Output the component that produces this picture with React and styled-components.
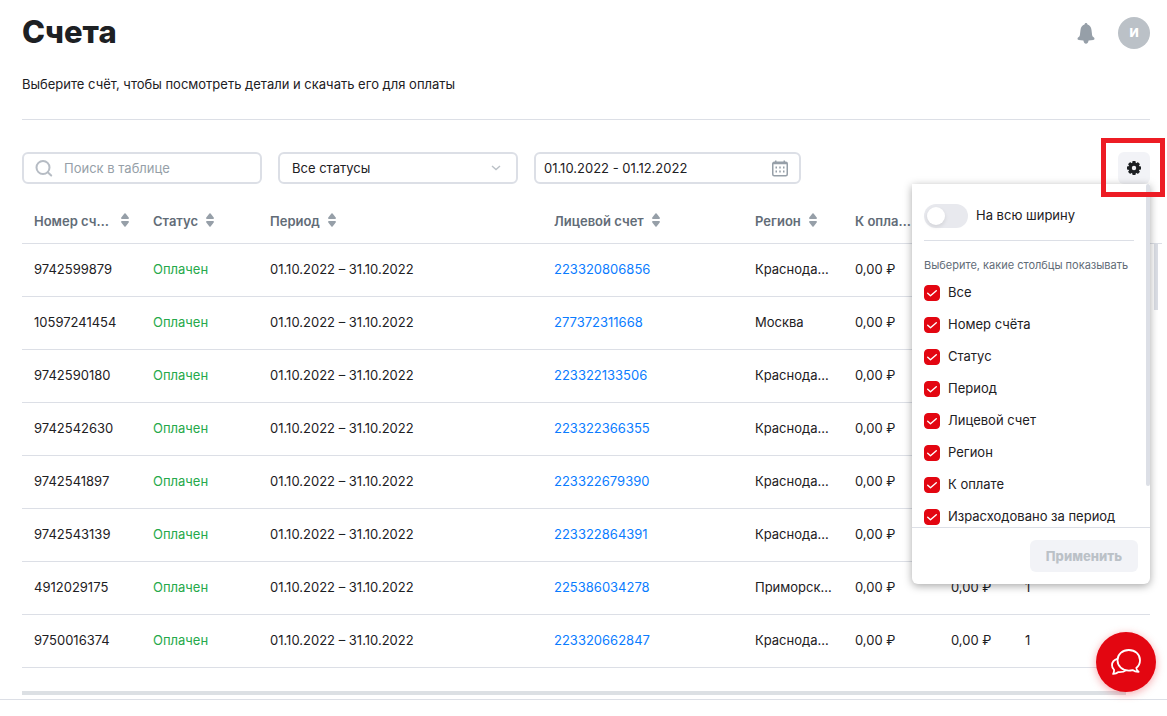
import React from "react";
import styled, { createGlobalStyle } from "styled-components";

const color = {
  text: "#1d2023",
  muted: "#626c77",
  icon: "#969fa8",
  line: "#dcdfe6",
  hover: "#f2f3f7",
  red: "#e30611",
  green: "#26a94a",
  link: "#0a7cff",
};

const GlobalStyle = createGlobalStyle`
  *, *::before, *::after { box-sizing: border-box; }
  body {
    margin: 0;
    background: #fff;
    color: ${color.text};
    font: 400 13px/20px Inter, "Liberation Sans", sans-serif;
    overflow-x: hidden;
  }
  button, input, select { font: inherit; color: inherit; margin: 0; }
`;

const Page = styled.main`
  padding: 12px 17px 4px 22px;
  border-bottom: 1px solid ${color.line};
`;

const Header = styled.header`
  display: flex;
  justify-content: space-between;
  align-items: flex-start;
  padding-bottom: 25px;
  border-bottom: 1px solid ${color.line};
`;

const Title = styled.h1`
  margin: 0 0 22px;
  font-size: 31px;
  line-height: 40px;
  font-weight: 800;
`;

const Subtitle = styled.p`
  margin: 0;
`;

const UserArea = styled.div`
  display: flex;
  align-items: center;
  gap: 20px;
  padding-top: 5px;
`;

const BellButton = styled.button`
  display: grid;
  place-items: center;
  width: 24px;
  height: 32px;
  padding: 0;
  border: 0;
  background: none;
`;

const Avatar = styled.button`
  width: 32px;
  height: 32px;
  padding: 0;
  border: 0;
  border-radius: 50%;
  background: #bbc1c7;
  color: #fff;
  font-size: 12px;
  font-weight: 800;
`;

const Toolbar = styled.div`
  display: flex;
  gap: 16px;
  margin-top: 32px;
`;

const Field = styled.div`
  display: flex;
  align-items: center;
  position: relative;
  width: ${(p) => p.$width}px;
  height: 32px;
  border: 2px solid ${color.line};
  border-radius: 6px;
  svg { flex: none; pointer-events: none; }
`;

const SearchField = styled(Field)`
  gap: 11px;
  padding: 0 11px;
`;

const TextInput = styled.input`
  flex: 1;
  min-width: 0;
  padding: 0;
  border: 0;
  outline: 0;
  background: none;
  &::placeholder { color: ${color.icon}; opacity: 1; }
`;

const StatusSelect = styled.select`
  width: 100%;
  height: 100%;
  padding: 0 32px 0 12px;
  border: 0;
  outline: 0;
  appearance: none;
  background: none;
`;

const SelectArrow = styled.span`
  position: absolute;
  right: 15px;
  display: flex;
  pointer-events: none;
`;

const DateField = styled(Field)`
  padding: 0 11px 0 8px;
`;

const Settings = styled.div`
  position: relative;
  margin-left: auto;
`;

const GearButton = styled.button`
  display: grid;
  place-items: center;
  width: 32px;
  height: 32px;
  padding: 0;
  border: 0;
  border-radius: 6px;
  background: ${color.hover};
`;

const Highlight = styled.div`
  position: absolute;
  z-index: 4;
  top: -14px;
  right: -15px;
  width: 64px;
  height: 59px;
  border: 5px solid #ed1c24;
  pointer-events: none;
`;

const Panel = styled.form`
  position: absolute;
  z-index: 3;
  top: 32px;
  right: 0;
  width: 238px;
  border-radius: 0 0 6px 6px;
  background: #fff;
  box-shadow: 0 2px 8px rgba(0, 0, 0, 0.35);
`;

const PanelBody = styled.div`
  position: relative;
  height: 343px;
  padding: 20px 16px 0 12px;
  overflow: hidden;
`;

const PanelThumb = styled.div`
  position: absolute;
  top: 0;
  right: 0;
  width: 4px;
  height: 302px;
  border-radius: 4px;
  background: ${color.line};
`;

const LabelText = styled.span`
  padding-bottom: 2px;
`;

const SwitchLabel = styled.label`
  display: flex;
  align-items: center;
  gap: 8px;
  padding-bottom: 12px;
  border-bottom: 1px solid ${color.line};
`;

const Switch = styled.input`
  appearance: none;
  display: flex;
  align-items: center;
  width: 44px;
  height: 24px;
  padding: 0 3px;
  border-radius: 12px;
  background: #e8e9ee;
  &::before {
    content: "";
    width: 18px;
    height: 18px;
    border-radius: 50%;
    background: #fff;
    box-shadow: 0 2px 4px rgba(0, 0, 0, 0.1);
  }
  &:checked { justify-content: flex-end; background: ${color.red}; }
`;

const Columns = styled.fieldset`
  margin: 0;
  padding: 16px 0 0;
  border: 0;
`;

const Caption = styled.legend`
  float: left;
  padding: 0;
  margin-bottom: 4px;
  color: ${color.muted};
  font-size: 11px;
  line-height: 16px;
  white-space: nowrap;
`;

const CheckRow = styled.label`
  clear: both;
  display: flex;
  align-items: center;
  gap: 8px;
  height: 32px;
  white-space: nowrap;
`;

const CheckBox = styled.span`
  display: grid;
  width: 16px;
  height: 16px;
  > * { grid-area: 1 / 1; }
  svg { pointer-events: none; }
`;

const CheckInput = styled.input`
  appearance: none;
  width: 16px;
  height: 16px;
  margin: 0;
  border: 1px solid ${color.icon};
  border-radius: 4px;
  &:checked { border-color: ${color.red}; background: ${color.red}; }
`;

const PanelFooter = styled.div`
  display: flex;
  justify-content: flex-end;
  padding: 12px;
  border-top: 1px solid ${color.line};
`;

const ApplyButton = styled.button`
  height: 32px;
  padding: 0 16px;
  border: 0;
  border-radius: 6px;
  background: ${color.hover};
  color: #bbc1c7;
  font-weight: 800;
`;

const TableArea = styled.div`
  display: flex;
  margin: 12px -12px 0 0;
`;

const Table = styled.table`
  flex: 1;
  width: 100%;
  min-width: 0;
  table-layout: fixed;
  border-collapse: separate;
  border-spacing: 0;
`;

const Column = styled.col`
  width: ${(p) => (p.$width ? `${p.$width}px` : "auto")};
`;

const HeadCell = styled.th`
  height: 48px;
  padding: 2px 12px 0;
  border-bottom: 1px solid ${color.line};
  color: ${color.muted};
  font-weight: 600;
  text-align: left;
`;

const SortButton = styled.button`
  display: flex;
  align-items: center;
  gap: 8px;
  max-width: 100%;
  padding: 0;
  border: 0;
  background: none;
  font-weight: 600;
  svg { flex: none; margin-bottom: 2px; }
`;

const SortLabel = styled.span`
  overflow: hidden;
  text-overflow: ellipsis;
  white-space: nowrap;
`;

const Cell = styled.td`
  height: 53px;
  padding: 0 8px 2px 12px;
  border-bottom: 1px solid ${color.line};
  color: ${(p) => (p.$green ? color.green : color.text)};
  overflow: hidden;
  text-overflow: ellipsis;
  white-space: nowrap;
`;

const AccountLink = styled.a`
  color: ${color.link};
  text-decoration: none;
`;

const VerticalGutter = styled.div`
  flex: none;
  width: 12px;
`;

const GutterHead = styled.div`
  height: 48px;
  border-bottom: 1px solid ${color.line};
`;

const VerticalThumb = styled.div`
  width: 4px;
  height: 66px;
  margin-left: 4px;
  background: ${color.line};
`;

const HorizontalThumb = styled.div`
  height: 4px;
  margin: 23px 24px 0 0;
  background: #dce0e4;
`;

const ChatButton = styled.button`
  position: fixed;
  z-index: 5;
  right: 11px;
  bottom: 24px;
  display: grid;
  place-items: center;
  width: 60px;
  height: 60px;
  padding: 0;
  border: 0;
  border-radius: 50%;
  background: ${color.red};
  box-shadow: 0 2px 8px rgba(227, 6, 17, 0.35);
`;

const BellIcon = () => (
  <svg width="18" height="22" viewBox="0 0 18 22" fill="#969fa8" aria-hidden="true">
    <path d="M9 1c.8 0 1.400.6 1.500 1.500 2.300.8 3.700 2.700 4 5.600l.6 5c.1.9.5 1.500 1.200 2 .8.600 1.200 1.100 1.200 1.700 0 .7-.4 1-1.300 1.200-1.300.3-2.900.4-4.600.5-.5 2.200-1.300 3.300-2.600 3.300s-2.100-1.100-2.600-3.300c-1.700-.1-3.300-.2-4.600-.5C.9 17.800.5 17.500.5 16.800c0-.6.4-1.100 1.200-1.700.7-.5 1.100-1.100 1.200-2l.6-5c.3-2.900 1.700-4.800 4-5.600C7.600 1.600 8.200 1 9 1z" />
  </svg>
);

const SearchIcon = () => (
  <svg width="18" height="18" viewBox="0 0 18 18" fill="none" stroke="#b6bcc4" strokeWidth="2" strokeLinecap="round" aria-hidden="true">
    <circle cx="8" cy="8.500" r="6.500" />
    <path d="M13 13.500l3.200 3" />
  </svg>
);

const ChevronIcon = () => (
  <svg width="10" height="6" viewBox="0 0 10 6" fill="none" stroke="#bbc1c7" strokeWidth="1.400" aria-hidden="true">
    <path d="M1 1l4 3.600L9 1" />
  </svg>
);

const CalendarIcon = () => (
  <svg width="16" height="17" viewBox="0 0 16 17" fill="none" stroke="#969fa8" aria-hidden="true">
    <rect x=".75" y="2.250" width="14.500" height="13.500" rx="1.500" strokeWidth="1.500" />
    <path d="M1 3.500h14M3.750.5v3M12.250.5v3" strokeWidth="1.500" />
    <path d="M3.500 7.500h9.500M3.500 11.500h9.500" strokeWidth="2" strokeDasharray="1.500 2.250" />
  </svg>
);

const GearIcon = () => (
  <svg width="14" height="14" viewBox="0 0 14 14" aria-hidden="true">
    <g fill="#1d2023">
      {[0, 45, 90, 135].map((angle) => (
        <rect key={angle} x="5.300" y="0" width="3.400" height="14" rx=".8" transform={`rotate(${angle} 7 7)`} />
      ))}
      <circle cx="7" cy="7" r="5.600" />
    </g>
    <circle cx="7" cy="7" r="2.200" fill="#f2f3f7" />
  </svg>
);

const SortIcon = () => (
  <svg width="8" height="14" viewBox="0 0 8 14" fill="#969fa8" aria-hidden="true">
    <path d="M3.400.6a.8.8 0 0 1 1.200 0L7.700 4.500C8.200 5.200 7.900 6 7 6H1C.1 6-.2 5.200.3 4.500zM3.400 13.400a.8.8 0 0 0 1.200 0l3.100-3.900C8.200 8.800 7.900 8 7 8H1C.1 8-.2 8.800.3 9.500z" />
  </svg>
);

const CheckIcon = () => (
  <svg width="16" height="16" viewBox="0 0 16 16" fill="none" stroke="#fff" strokeWidth="1.400" strokeLinecap="round" strokeLinejoin="round" aria-hidden="true">
    <path d="M3.700 8.200l2.800 2.500 5.800-5" />
  </svg>
);

const ChatIcon = () => (
  <svg width="32" height="28" viewBox="0 0 32 28" fill="none" stroke="#fff" strokeWidth="1.800" strokeLinejoin="round" aria-hidden="true">
    <path d="M26.300 20C28.700 18 30 15.200 30 12.200 30 6.400 25.200 2 18.800 2S7.500 6.400 7.500 12.200s4.900 10.400 11.300 10.400c1.400 0 2.600-.2 3.800-.5 1.700 1.200 3.800 1.800 6 1.700-1.300-.9-2.100-2.200-2.300-3.800z" />
    <path d="M7.800 10.600C4 11.700 2 14.300 2 17.200c0 1.900.7 3.500 2.100 4.700 0 1.600-.3 2.800-1 4 2.200-.1 3.900-.7 5.400-1.800 3.100.2 5.900-.5 7.800-2" />
  </svg>
);

const COLUMNS = [
  { name: "Номер счёта", width: 119 },
  { name: "Статус", width: 117 },
  { name: "Период", width: 284 },
  { name: "Лицевой счет", width: 201 },
  { name: "Регион", width: 100 },
  { name: "К оплате", width: 96 },
  { name: "Израсходовано за период", width: 74 },
  { name: "Счета", width: 0 },
];

const ROWS = [
  ["9742599879", "223320806856", "Краснодарский край"],
  ["10597241454", "277372311668", "Москва"],
  ["9742590180", "223322133506", "Краснодарский край"],
  ["9742542630", "223322366355", "Краснодарский край"],
  ["9742541897", "223322679390", "Краснодарский край"],
  ["9742543139", "223322864391", "Краснодарский край"],
  ["4912029175", "225386034278", "Приморский край"],
  ["9750016374", "223320662847", "Краснодарский край"],
];

const OPTIONS = ["Все", "Номер счёта", "Статус", "Период", "Лицевой счет", "Регион", "К оплате", "Израсходовано за период"];

function ColumnSettings() {
  return (
    <Panel onSubmit={(e) => e.preventDefault()}>
      <PanelBody>
        <SwitchLabel>
          <Switch type="checkbox" role="switch" />
          <LabelText>На всю ширину</LabelText>
        </SwitchLabel>
        <Columns>
          <Caption>Выберите, какие столбцы показывать</Caption>
          {OPTIONS.map((option) => (
            <CheckRow key={option}>
              <CheckBox>
                <CheckInput type="checkbox" defaultChecked />
                <CheckIcon />
              </CheckBox>
              <LabelText>{option}</LabelText>
            </CheckRow>
          ))}
        </Columns>
        <PanelThumb />
      </PanelBody>
      <PanelFooter>
        <ApplyButton type="submit" disabled>Применить</ApplyButton>
      </PanelFooter>
    </Panel>
  );
}

function InvoiceTable() {
  return (
    <Table>
      <colgroup>
        {COLUMNS.map((c) => <Column key={c.name} $width={c.width} />)}
      </colgroup>
      <thead>
        <tr>
          {COLUMNS.map((c) => (
            <HeadCell key={c.name} scope="col">
              <SortButton type="button">
                <SortLabel>{c.name}</SortLabel>
                <SortIcon />
              </SortButton>
            </HeadCell>
          ))}
        </tr>
      </thead>
      <tbody>
        {ROWS.map(([number, account, region]) => (
          <tr key={number}>
            <Cell>{number}</Cell>
            <Cell $green>Оплачен</Cell>
            <Cell>01.10.2022 – 31.10.2022</Cell>
            <Cell><AccountLink href="#account">{account}</AccountLink></Cell>
            <Cell>{region}</Cell>
            <Cell>0,00 ₽</Cell>
            <Cell>0,00 ₽</Cell>
            <Cell>1</Cell>
          </tr>
        ))}
      </tbody>
    </Table>
  );
}

export default function App() {
  return (
    <>
      <GlobalStyle />
      <Page>
        <Header>
          <div>
            <Title>Счета</Title>
            <Subtitle>Выберите счёт, чтобы посмотреть детали и скачать его для оплаты</Subtitle>
          </div>
          <UserArea>
            <BellButton type="button" aria-label="Уведомления"><BellIcon /></BellButton>
            <Avatar type="button">И</Avatar>
          </UserArea>
        </Header>
        <Toolbar>
          <SearchField $width={240}>
            <SearchIcon />
            <TextInput type="search" placeholder="Поиск в таблице" aria-label="Поиск в таблице" />
          </SearchField>
          <Field $width={240}>
            <StatusSelect aria-label="Статус" defaultValue="all">
              <option value="all">Все статусы</option>
              <option value="paid">Оплачен</option>
            </StatusSelect>
            <SelectArrow><ChevronIcon /></SelectArrow>
          </Field>
          <DateField $width={267}>
            <TextInput type="text" defaultValue="01.10.2022 - 01.12.2022" aria-label="Период" />
            <CalendarIcon />
          </DateField>
          <Settings>
            <GearButton type="button" aria-label="Настройки таблицы"><GearIcon /></GearButton>
            <ColumnSettings />
            <Highlight />
          </Settings>
        </Toolbar>
        <TableArea>
          <InvoiceTable />
          <VerticalGutter>
            <GutterHead />
            <VerticalThumb />
          </VerticalGutter>
        </TableArea>
        <HorizontalThumb />
      </Page>
      <ChatButton type="button" aria-label="Чат"><ChatIcon /></ChatButton>
    </>
  );
}
